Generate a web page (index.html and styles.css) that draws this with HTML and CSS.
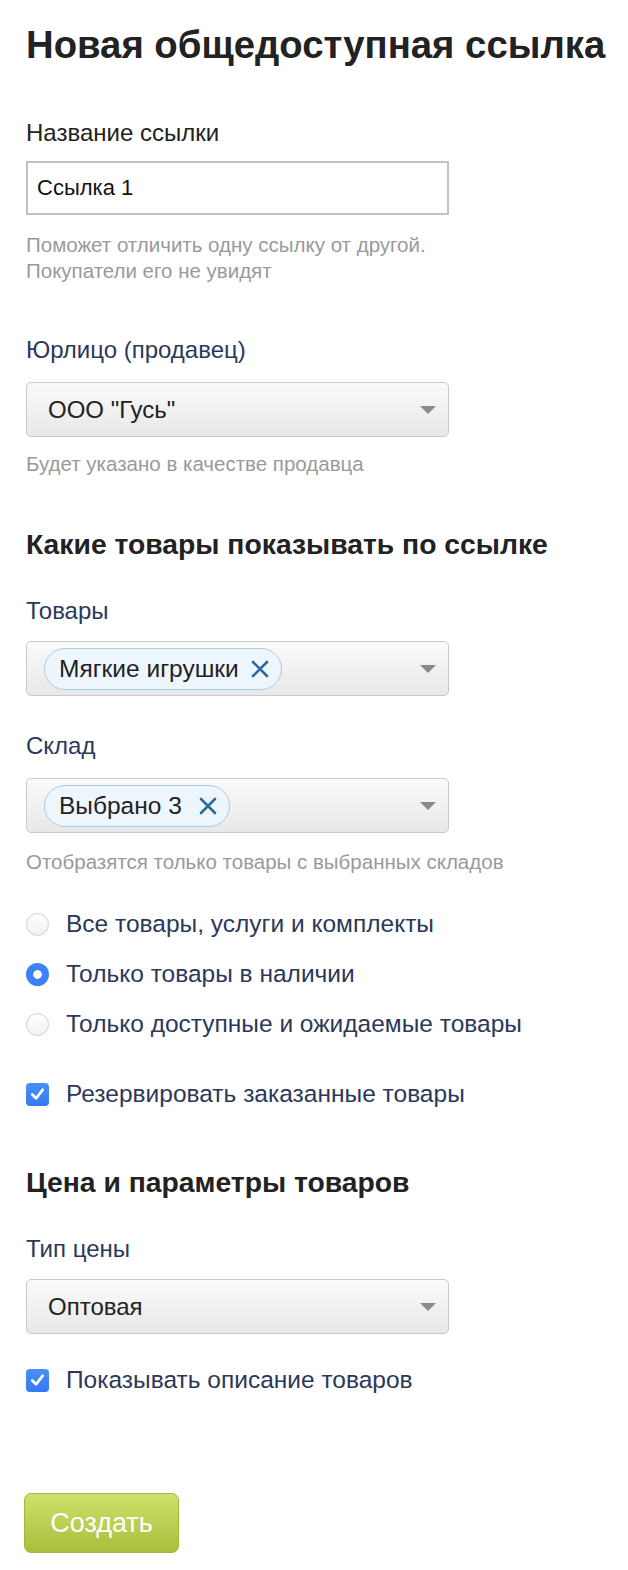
FILE: index.html
```html
<!DOCTYPE html>
<html lang="ru">
<head>
<meta charset="utf-8">
<title>Новая общедоступная ссылка</title>
<link rel="stylesheet" href="styles.css">
</head>
<body>
<div class="page">
  <h1 class="title">Новая общедоступная ссылка</h1>

  <div class="field field-name">
    <div class="label label-dark">Название ссылки</div>
    <div class="input">Ссылка 1</div>
    <div class="hint">Поможет отличить одну ссылку от другой.<br>Покупатели его не увидят</div>
  </div>

  <div class="field field-seller">
    <div class="label">Юрлицо (продавец)</div>
    <div class="select"><span class="select-value">ООО "Гусь"</span><span class="arrow"></span></div>
    <div class="hint">Будет указано в качестве продавца</div>
  </div>

  <h2 class="section">Какие товары показывать по ссылке</h2>

  <div class="field field-goods">
    <div class="label">Товары</div>
    <div class="select select-tags"><span class="tag"><span class="tag-text">Мягкие игрушки</span><svg class="tag-x" viewBox="0 0 18 18" width="18" height="18"><path d="M2 2 L16 16 M16 2 L2 16" stroke="#2d6a9c" stroke-width="2.6" stroke-linecap="round"/></svg></span><span class="arrow"></span></div>
  </div>

  <div class="field field-store">
    <div class="label">Склад</div>
    <div class="select select-tags"><span class="tag tag-wide"><span class="tag-text">Выбрано 3</span><svg class="tag-x" viewBox="0 0 18 18" width="18" height="18"><path d="M2 2 L16 16 M16 2 L2 16" stroke="#2d6a9c" stroke-width="2.6" stroke-linecap="round"/></svg></span><span class="arrow"></span></div>
    <div class="hint">Отобразятся только товары с выбранных складов</div>
  </div>

  <div class="radios">
    <div class="option"><span class="radio"></span><span class="opt-text">Все товары, услуги и комплекты</span></div>
    <div class="option"><span class="radio radio-on"></span><span class="opt-text">Только товары в наличии</span></div>
    <div class="option"><span class="radio"></span><span class="opt-text">Только доступные и ожидаемые товары</span></div>
  </div>

  <div class="option option-check"><span class="check"><svg viewBox="0 0 24 24" width="24" height="24"><path d="M6.5 12.5 L10.5 16.5 L17.5 7.5" fill="none" stroke="#fff" stroke-width="2.8" stroke-linecap="round" stroke-linejoin="round"/></svg></span><span class="opt-text">Резервировать заказанные товары</span></div>

  <h2 class="section section-price">Цена и параметры товаров</h2>

  <div class="field field-price">
    <div class="label">Тип цены</div>
    <div class="select"><span class="select-value">Оптовая</span><span class="arrow"></span></div>
  </div>

  <div class="option option-check option-desc"><span class="check"><svg viewBox="0 0 24 24" width="24" height="24"><path d="M6.5 12.5 L10.5 16.5 L17.5 7.5" fill="none" stroke="#fff" stroke-width="2.8" stroke-linecap="round" stroke-linejoin="round"/></svg></span><span class="opt-text">Показывать описание товаров</span></div>

  <div class="actions"><button class="btn">Создать</button></div>
</div>
</body>
</html>
```

FILE: styles.css
```css
* { box-sizing: border-box; }
html, body { margin: 0; padding: 0; background: #fff; }
body {
  font-family: "Liberation Sans", Arial, Helvetica, sans-serif;
  color: #222;
}
.page {
  padding: 21px 0 0 26px;
  width: 628px;
}
.title {
  margin: 0;
  font-size: 38.3px;
  line-height: 48px;
  font-weight: bold;
  color: #222;
}
.label {
  font-size: 24px;
  line-height: 28px;
  color: #2b3858;
}
.label-dark { color: #222; }
.field-name { margin-top: 50px; }
.input {
  margin-top: 14px;
  width: 423px;
  height: 54px;
  border: 2px solid #c2c2c2;
  padding: 0 9px;
  font-size: 22px;
  line-height: 50px;
  color: #111;
}
.hint {
  margin-top: 17px;
  font-size: 20.5px;
  line-height: 26px;
  color: #9a9a9a;
}
.field-seller { margin-top: 52px; }
.select {
  margin-top: 18px;
  width: 423px;
  height: 55px;
  border: 1px solid #c9c9c9;
  border-radius: 5px;
  background: linear-gradient(#fafafa, #e8e8e8);
  display: flex;
  align-items: center;
  padding: 0 12px 0 21px;
  font-size: 24px;
  color: #222;
}
.select-value { flex: 1; }
.select-tags { padding-left: 17px; }
.select-tags .tag { margin-right: auto; }
.arrow {
  width: 0; height: 0;
  border-left: 8px solid transparent;
  border-right: 8px solid transparent;
  border-top: 8px solid #8a8a8a;
}
.field-seller .hint { margin-top: 14px; }
.tag {
  display: inline-flex;
  align-items: center;
  height: 42px;
  padding: 0 12px 0 14px;
  border: 1px solid #a9cbe6;
  border-radius: 21px;
  background: #eef6fd;
  font-size: 24.5px;
  color: #222;
}
.tag-x {
  margin-left: 12px;
  flex: none;
}
.tag-wide .tag-x { margin-left: 17px; }
.section {
  margin: 50px 0 0;
  font-size: 28.3px;
  line-height: 34px;
  font-weight: bold;
  color: #222;
}
.field-goods { margin-top: 36px; }
.field-goods .select { margin-top: 16px; }
.field-store { margin-top: 36px; }
.field-store .select { margin-top: 18px; }
.field-store .hint { margin-top: 16px; }
.radios {
  margin-top: 35px;
  display: flex;
  flex-direction: column;
  gap: 22px;
}
.option {
  display: flex;
  align-items: center;
  height: 28px;
}
.radio {
  width: 23px; height: 23px;
  border-radius: 50%;
  border: 1px solid #cfcfcf;
  background: linear-gradient(#fff, #f1f1f1);
  margin-right: 17px;
  flex: none;
}
.radio-on {
  border: none;
  background: radial-gradient(circle, #fff 0 4px, #3b82f6 4.6px);
}
.opt-text {
  font-size: 24.5px;
  color: #2b3858;
}
.check {
  width: 23px; height: 23px;
  border-radius: 4px;
  background: linear-gradient(#4a8ff8, #3479f2);
  margin-right: 17px;
  flex: none;
  display: flex;
  align-items: center;
  justify-content: center;
}
.option-check { margin-top: 42px; }
.section-price { margin-top: 57px; }
.field-price { margin-top: 36px; }
.field-price .select { margin-top: 16px; }
.option-desc { margin-top: 32px; }
.actions { margin-top: 99px; }
.btn {
  margin-left: -2px;
  width: 155px;
  height: 60px;
  border: 1px solid #a2b83a;
  border-radius: 7px;
  background: linear-gradient(#cfe06c, #a8bf3c);
  color: #fff;
  font-family: "Liberation Sans", Arial, sans-serif;
  font-size: 27px;
  padding: 0;
}
```
